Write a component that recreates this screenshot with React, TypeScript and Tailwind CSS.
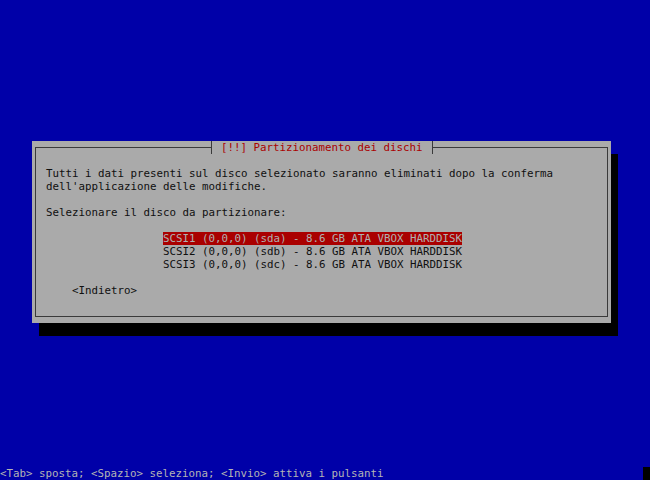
export default function App() {
  return (
    <div className="w-[650px] h-[480px] bg-[#0000a8] flex flex-col overflow-hidden font-['DejaVu_Sans_Mono','Liberation_Mono',monospace] text-[10.8px] leading-[13px] whitespace-pre">
      <div className="flex-1">
        <div className="ml-[32px] mt-[141px] w-[579px] h-[182px] bg-[#aaaaaa] px-[3px] py-[6px] shadow-[7px_13px_0_0_#000000]">
          <div className="relative h-full border border-[#3a3a3a] pl-[10px] pt-[19px] text-[#101010]">
            <div className="absolute top-[-7px] left-[175px] flex h-[13px]">
              <div className="w-[1px] bg-[#3a3a3a]" />
              <div className="bg-[#aaaaaa] pl-[9px] pr-[9px] text-[#aa0000]">[!!] Partizionamento dei dischi</div>
              <div className="w-[1px] bg-[#3a3a3a]" />
            </div>
            <div>Tutti i dati presenti sul disco selezionato saranno eliminati dopo la conferma</div>
            <div>dell'applicazione delle modifiche.</div>
            <div className="h-[13px]" />
            <div>Selezionare il disco da partizionare:</div>
            <div className="h-[13px]" />
            <div className="ml-[117px] flex flex-col items-start">
              <div className="bg-[#aa0000] text-[#b0b0b0]">SCSI1 (0,0,0) (sda) - 8.6 GB ATA VBOX HARDDISK</div>
              <div>SCSI2 (0,0,0) (sdb) - 8.6 GB ATA VBOX HARDDISK</div>
              <div>SCSI3 (0,0,0) (sdc) - 8.6 GB ATA VBOX HARDDISK</div>
            </div>
            <div className="h-[13px]" />
            <div className="ml-[26px]">&lt;Indietro&gt;</div>
          </div>
        </div>
      </div>
      <div className="h-[13px] flex justify-between text-[#b4b4b4]">
        <div>&lt;Tab&gt; sposta; &lt;Spazio&gt; seleziona; &lt;Invio&gt; attiva i pulsanti</div>
        <div className="w-[7px] h-[13px] bg-black" />
      </div>
    </div>
  );
}
